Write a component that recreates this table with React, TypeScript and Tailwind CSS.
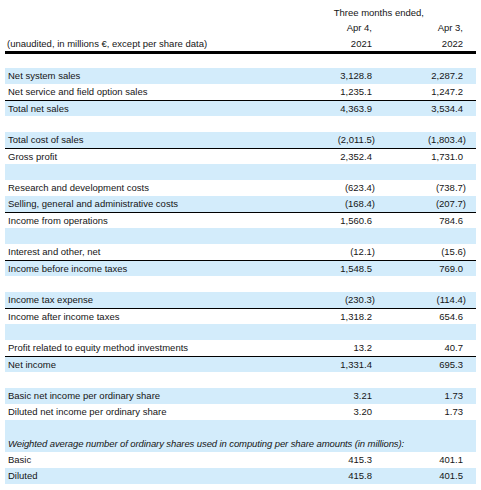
import React from "react";

type Row = {
  label?: string;
  a?: string;
  b?: string;
  blue?: boolean;
  line?: boolean;
  italic?: boolean;
};

// Condensed statement of operations, one entry per 16px row
const rows: Row[] = [
  { label: "Net system sales", a: "3,128.8", b: "2,287.2", blue: true },
  { label: "Net service and field option sales", a: "1,235.1", b: "1,247.2" },
  { label: "Total net sales", a: "4,363.9", b: "3,534.4", blue: true, line: true },
  {},
  { label: "Total cost of sales", a: "(2,011.5)", b: "(1,803.4)", blue: true },
  { label: "Gross profit", a: "2,352.4", b: "1,731.0", line: true },
  { blue: true },
  { label: "Research and development costs", a: "(623.4)", b: "(738.7)" },
  { label: "Selling, general and administrative costs", a: "(168.4)", b: "(207.7)", blue: true },
  { label: "Income from operations", a: "1,560.6", b: "784.6", line: true },
  { blue: true },
  { label: "Interest and other, net", a: "(12.1)", b: "(15.6)" },
  { label: "Income before income taxes", a: "1,548.5", b: "769.0", blue: true, line: true },
  {},
  { label: "Income tax expense", a: "(230.3)", b: "(114.4)", blue: true },
  { label: "Income after income taxes", a: "1,318.2", b: "654.6", line: true },
  { blue: true },
  { label: "Profit related to equity method investments", a: "13.2", b: "40.7" },
  { label: "Net income", a: "1,331.4", b: "695.3", blue: true, line: true },
  {},
  { label: "Basic net income per ordinary share", a: "3.21", b: "1.73", blue: true },
  { label: "Diluted net income per ordinary share", a: "3.20", b: "1.73" },
  { blue: true },
  {
    label:
      "Weighted average number of ordinary shares used in computing per share amounts (in millions):",
    blue: true,
    italic: true,
  },
  { label: "Basic", a: "415.3", b: "401.1" },
  { label: "Diluted", a: "415.8", b: "401.5", blue: true },
];

function Num({ v }: { v?: string }) {
  if (!v) return null;
  // closing paren hangs past the figure column
  if (v.endsWith(")")) {
    return (
      <span>
        {v.slice(0, -1)}
        <span className="-mr-[3px]">)</span>
      </span>
    );
  }
  return <span>{v}</span>;
}

export default function App() {
  return (
    <div
      className="w-[481px] h-[490px] bg-white px-[5px] pt-[5px] text-[9.5px] text-[#151515] leading-none"
      style={{ fontFamily: '"Liberation Sans", Arial, sans-serif' }}
    >
      {/* Header */}
      <div className="flex h-[15px] items-center justify-end pr-[52px]">Three months ended,</div>
      <div className="flex h-[16px] items-center">
        <div className="flex-1" />
        <div className="w-[90px] text-right">Apr 4,</div>
        <div className="w-[91px] text-right">Apr 3,</div>
        <div className="w-[13px]" />
      </div>
      <div className="flex h-[15px] items-center">
        <div className="flex-1 pl-[2px]">(unaudited, in millions €, except per share data)</div>
        <div className="w-[90px] text-right">2021</div>
        <div className="w-[91px] text-right">2022</div>
        <div className="w-[13px]" />
      </div>
      <div className="h-[3px] bg-black" />
      <div className="h-[14px]" />

      {/* Body */}
      {rows.map((r, i) => (
        <div
          key={i}
          className={`flex h-4 items-center ${r.blue ? "bg-[#d3ecfb]" : "bg-white"} ${
            r.line ? "border-t border-black" : ""
          }`}
        >
          <div
            className={`flex-1 pl-[3px] whitespace-nowrap ${
              r.italic ? "italic tracking-[-0.1px]" : ""
            }`}
          >
            {r.label}
          </div>
          {!r.italic && (
            <>
              <div className="w-[90px] text-right">
                <Num v={r.a} />
              </div>
              <div className="w-[91px] text-right">
                <Num v={r.b} />
              </div>
              <div className="w-[13px]" />
            </>
          )}
        </div>
      ))}
    </div>
  );
}
